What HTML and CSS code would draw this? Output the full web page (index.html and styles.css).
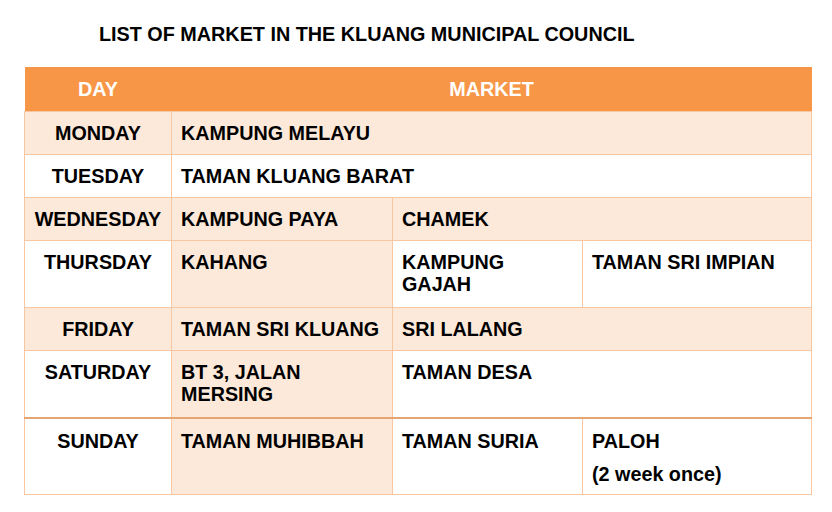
FILE: index.html
```html
<!DOCTYPE html>
<html>
<head>
<meta charset="utf-8">
<link rel="stylesheet" href="styles.css">
</head>
<body>
<h1 class="title">LIST OF MARKET IN THE KLUANG MUNICIPAL COUNCIL</h1>
<table class="markets">
  <colgroup>
    <col class="c1"><col class="c2"><col class="c3"><col class="c4">
  </colgroup>
  <thead>
    <tr class="head">
      <th>DAY</th>
      <th colspan="3">MARKET</th>
    </tr>
  </thead>
  <tbody>
    <tr class="r1 shade">
      <td class="day">MONDAY</td>
      <td colspan="3">KAMPUNG MELAYU</td>
    </tr>
    <tr class="r1">
      <td class="day">TUESDAY</td>
      <td colspan="3">TAMAN KLUANG BARAT</td>
    </tr>
    <tr class="r1 shade">
      <td class="day">WEDNESDAY</td>
      <td>KAMPUNG PAYA</td>
      <td colspan="2">CHAMEK</td>
    </tr>
    <tr class="r2">
      <td class="day">THURSDAY</td>
      <td class="fill">KAHANG</td>
      <td>KAMPUNG<br>GAJAH</td>
      <td>TAMAN SRI IMPIAN</td>
    </tr>
    <tr class="r1 shade">
      <td class="day">FRIDAY</td>
      <td>TAMAN SRI KLUANG</td>
      <td colspan="2">SRI LALANG</td>
    </tr>
    <tr class="r2 last-before">
      <td class="day">SATURDAY</td>
      <td class="fill">BT 3, JALAN<br>MERSING</td>
      <td colspan="2">TAMAN DESA</td>
    </tr>
    <tr class="r3">
      <td class="day">SUNDAY</td>
      <td class="fill">TAMAN MUHIBBAH</td>
      <td>TAMAN SURIA</td>
      <td><p class="para">PALOH</p><p class="para note">(2 week once)</p></td>
    </tr>
  </tbody>
</table>
</body>
</html>
```

FILE: styles.css
```css
html, body {
  margin: 0;
  padding: 0;
  background: #ffffff;
}

body {
  font-family: "Liberation Sans", Arial, sans-serif;
  font-weight: bold;
  color: #000000;
  font-size: 19.75px;
  line-height: 22px;
}

.title {
  margin: 0;
  padding: 23px 0 0 99px;
  font-size: 19.8px;
  line-height: 22px;
  font-weight: bold;
}

.markets {
  margin: 22px 0 0 24px;
  border-collapse: collapse;
  table-layout: fixed;
  width: 787px;
}

.c1 { width: 147px; }
.c2 { width: 221px; }
.c3 { width: 190px; }
.c4 { width: 229px; }

.markets th {
  background: #f79646;
  color: #ffffff;
  text-align: center;
  height: 44px;
  padding: 0;
  border: 0;
  font-weight: bold;
}

.markets td {
  border: 1px solid #f8c6a0;
  padding: 10px 9px 10px 9px;
  vertical-align: top;
  text-align: left;
  background: #ffffff;
}

.markets td.day {
  text-align: center;
  padding-left: 4px;
  padding-right: 4px;
}

.shade td,
.markets td.fill {
  background: #fde9d9;
}

.r1 td { height: 22px; }
.r2 td { height: 46px; }

.last-before td {
  border-bottom: 2px solid #e5a674;
}

.r3 td {
  padding-top: 11px;
  padding-bottom: 9px;
  height: 55px;
}

.para {
  margin: 0;
}

.note {
  margin-top: 11px;
}
```
